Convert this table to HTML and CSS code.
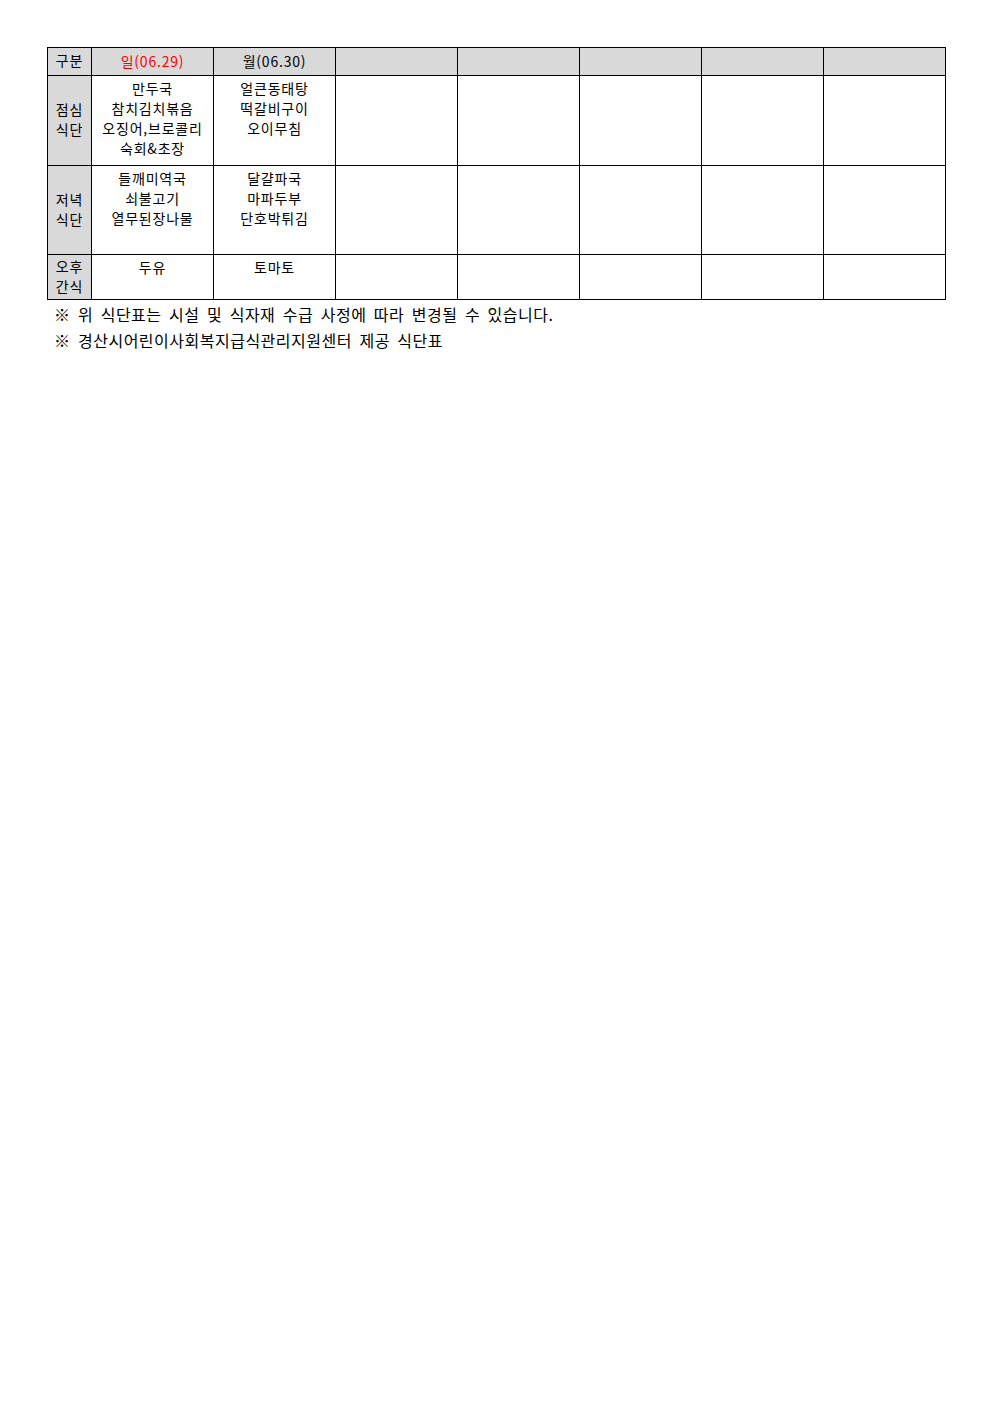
FILE: index.html
```html
<!DOCTYPE html>
<html lang="ko">
<head>
<meta charset="utf-8">
<link rel="stylesheet" href="styles.css">
</head>
<body>
<div class="page">
<table class="menu">
<colgroup>
<col class="c-label"><col class="c-day"><col class="c-day"><col class="c-day"><col class="c-day"><col class="c-day"><col class="c-day"><col class="c-day">
</colgroup>
<tr class="r-head">
<th class="label">구분</th>
<th class="sun">일(06.29)</th>
<th>월(06.30)</th>
<th></th><th></th><th></th><th></th><th></th>
</tr>
<tr class="r-meal">
<th class="label">점심<br>식단</th>
<td>만두국<br>참치김치볶음<br>오징어,브로콜리<br>숙회&amp;초장</td>
<td>얼큰동태탕<br>떡갈비구이<br>오이무침</td>
<td></td><td></td><td></td><td></td><td></td>
</tr>
<tr class="r-meal2">
<th class="label">저녁<br>식단</th>
<td>들깨미역국<br>쇠불고기<br>열무된장나물</td>
<td>달걀파국<br>마파두부<br>단호박튀김</td>
<td></td><td></td><td></td><td></td><td></td>
</tr>
<tr class="r-snack">
<th class="label">오후<br>간식</th>
<td>두유</td>
<td>토마토</td>
<td></td><td></td><td></td><td></td><td></td>
</tr>
</table>
<div class="notes">
<p>※ 위 식단표는 시설 및 식자재 수급 사정에 따라 변경될 수 있습니다.</p>
<p>※ 경산시어린이사회복지급식관리지원센터 제공 식단표</p>
</div>
</div>
</body>
</html>
```
FILE: styles.css
```css
html, body {
  margin: 0;
  padding: 0;
  background: #ffffff;
}
body {
  font-family: "Noto Sans CJK KR", "Noto Sans", sans-serif;
  color: #000;
}
.page {
  padding: 47px 0 0 47px;
}
.menu {
  border-collapse: collapse;
  table-layout: fixed;
  width: 899px;
  font-size: 14px;
  line-height: 20px;
  letter-spacing: 0.8px;
}
.c-label { width: 44px; }
.c-day { width: 122px; }
.menu th, .menu td {
  border: 1px solid #000;
  padding: 2px 0 0 0;
  text-align: center;
  vertical-align: top;
  font-weight: normal;
}
.r-head { height: 28px; }
.r-head th {
  background: #d9d9d9;
  vertical-align: middle;
  padding: 0 0 1px 0;
}
.menu th.label {
  background: #d9d9d9;
  vertical-align: middle;
  padding: 0 0 3px 0;
}
.menu .sun { color: #ff0000; }
.r-meal { height: 90px; }
.r-meal2 { height: 89px; }
.r-snack { height: 45px; }
.notes {
  padding: 1px 0 0 7px;
  font-size: 16px;
  line-height: 26px;
  letter-spacing: 0.5px;
  word-spacing: 2.5px;
}
.notes p {
  margin: 0;
}
```
